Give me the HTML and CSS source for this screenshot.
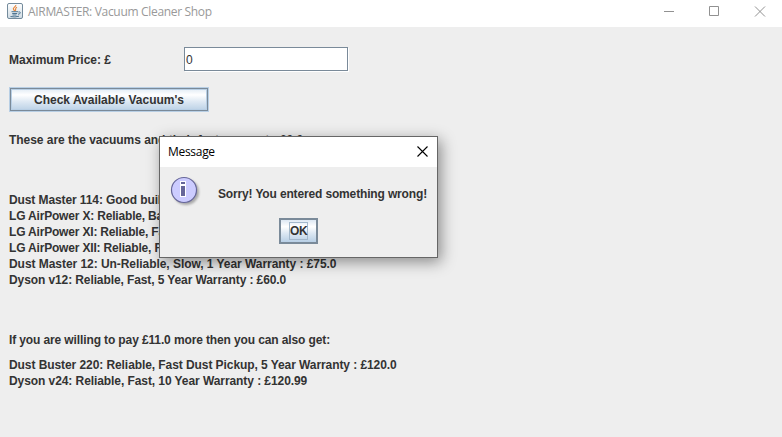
FILE: index.html
```html
<!DOCTYPE html>
<html lang="en">
<head>
<meta charset="utf-8">
<title>AIRMASTER: Vacuum Cleaner Shop</title>
<link rel="stylesheet" href="styles.css">
</head>
<body>
<header class="titlebar">
  <svg class="java" width="16" height="16" viewBox="0 0 16 16">
    <defs><linearGradient id="jg" x1="0" y1="0" x2="0" y2="1"><stop offset="0" stop-color="#fff"/><stop offset="1" stop-color="#cfdbe3"/></linearGradient></defs>
    <rect x=".5" y=".5" width="15" height="15" rx="1.5" fill="url(#jg)" stroke="#748b9c"/>
    <path d="M8.8 2C9.4 3.8 5.3 4.7 6.5 6.4L7.6 8M10 4.2C7.4 5.2 9.4 6.3 8.2 7.8" fill="none" stroke="#e8863a" stroke-width="1.2"/>
    <path d="M4.5 8.7H11M5.2 10.5h5M5.5 12h4M3.5 13.5Q8 14.5 12 13.2M11.3 9q2-.6 2 .7T11 11.3" fill="none" stroke="#4f7591"/>
  </svg>
  <span class="app-title">AIRMASTER: Vacuum Cleaner Shop</span>
  <svg class="controls" width="102" height="12" viewBox="0 0 102 12" fill="none" stroke="#919191">
    <path d="M0 5.5H10M45.5 .5H54.5V9.5H45.5ZM91 .5L101 10.5M101 .5L91 10.5"/>
  </svg>
</header>
<main class="content">
  <div class="price-row"><label class="w-price" for="price">Maximum Price: £</label><input id="price" class="field" value="0"></div>
  <button class="check"><span>Check Available Vacuum's</span></button>
  <p class="intro">These are the vacuums and their features up to £0.0</p>
  <div class="list">
    <p class="tight">Dust Master 114: Good build</p>
    <p class="tighter">LG AirPower X: Reliable, Bag</p>
    <p class="tighter">LG AirPower XI: Reliable, Fast</p>
    <p class="tighter">LG AirPower XII: Reliable, Fast</p>
    <p class="snug">Dust Master 12: Un-Reliable, Slow, 1 Year Warranty : £75.0</p>
    <p class="tight">Dyson v12: Reliable, Fast, 5 Year Warranty : £60.0</p>
  </div>
  <p class="more">If you are willing to pay £11.0 more then you can also get:</p>
  <div class="extra">
    <p>Dust Buster 220: Reliable, Fast Dust Pickup, 5 Year Warranty : £120.0</p>
    <p>Dyson v24: Reliable, Fast, 10 Year Warranty : £120.99</p>
  </div>
</main>
<section class="dialog" role="dialog">
  <div class="dialog-title"><span>Message</span>
    <svg width="11" height="11" viewBox="0 0 11 11"><path d="M.5 .5L10.5 10.5M10.5 .5L.5 10.5" stroke="#000" stroke-width="1.1"/></svg>
  </div>
  <div class="message">
    <svg class="info" width="32" height="32" viewBox="0 0 32 32">
      <defs>
        <filter id="sh" x="-20%" y="-20%" width="150%" height="150%"><feGaussianBlur stdDeviation="1.2"/></filter>
      </defs>
      <circle cx="16" cy="16" r="13" fill="#999" opacity=".8" filter="url(#sh)"/>
      <circle cx="14" cy="14" r="12.5" fill="#ccccff" stroke="#666699" stroke-width="1.2"/>
      <path d="M10 5h6v16h-6z" fill="#fff"/>
      <path d="M11 6h4v2h-4zM11 10h4v10h-4z" fill="#666699"/>
    </svg>
    <span>Sorry! You entered something wrong!</span>
  </div>
  <button class="ok"><span>OK</span></button>
</section>
</body>
</html>
```
FILE: styles.css
```css
* { box-sizing: border-box; }
body {
  margin: 0;
  width: 782px;
  height: 437px;
  overflow: hidden;
  background: #eee;
  color: #333;
  font: bold 12px/16px "Liberation Sans", Arial, sans-serif;
}
p { margin: 0; white-space: pre; }
svg { display: block; flex: none; }
button { font: inherit; color: inherit; padding: 0; }
.titlebar {
  display: flex;
  align-items: flex-start;
  height: 27px;
  background: #fff;
  font: 12px/16px "Open Sans", "Noto Sans", sans-serif;
  color: #999;
}
.java { margin: 3px 5px 0 7px; }
.app-title { margin-top: 4px; white-space: nowrap; letter-spacing: -0.32px; }
.controls { margin: 6px 16px 0 auto; }
.content { padding: 20px 9px 0; }
.price-row { display: flex; align-items: center; height: 25px; }
.w-price { width: 175px; }
.field {
  width: 164px;
  height: 24px;
  margin: 0 0 1px;
  padding: 1px 1px 0;
  border: 1px solid #7a8a99;
  border-radius: 0;
  background: #fff;
  box-shadow: 1px 1px 0 #fff;
  color: #333;
  font: 12px/16px "Liberation Sans", Arial, sans-serif;
  outline: 0;
}
.check {
  display: block;
  width: 200px;
  height: 25px;
  margin-top: 15px;
  border: 1px solid #b8cfe5;
  background: linear-gradient(#dde8f3, #fff 30%, #dde8f3 60%, #b8cfe5);
  box-shadow: inset 0 0 0 1px #7a8a99, inset 0 0 0 2px #b8cfe5;
}
.intro { margin-top: 20px; letter-spacing: -0.04px; }
.snug { letter-spacing: -0.05px; }
.tight { letter-spacing: -0.1px; }
.tighter { letter-spacing: -0.18px; }
.list { margin-top: 44px; }
.more { margin-top: 44px; letter-spacing: -0.12px; }
.extra { margin-top: 9px; letter-spacing: -0.075px; }
.dialog {
  position: absolute;
  left: 159px;
  top: 136px;
  width: 279px;
  height: 122px;
  border: 1px solid #666;
  background: #eee;
  box-shadow: 3px 4px 14px rgba(0, 0, 0, .42);
}
.dialog-title {
  display: flex;
  align-items: center;
  justify-content: space-between;
  height: 30px;
  padding: 0 9px 2px 8px;
  background: #fff;
  color: #000;
  font: 12px/16px "Open Sans", "Noto Sans", sans-serif;
  letter-spacing: -0.3px;
}
.dialog-title span { padding-top: 2px; }
.message { display: flex; height: 42px; padding: 9px 0 0 10px; white-space: nowrap; letter-spacing: -0.15px; }
.message span { margin: 10px 0 0 16px; }
.ok {
  display: grid;
  place-items: center;
  width: 39px;
  height: 26px;
  margin: 9px 0 0 119px;
  border: 2px solid #7a8a99;
  background: linear-gradient(#dde8f3, #fff 30%, #dde8f3 60%, #b8cfe5);
}
.ok span { width: 19px; height: 18px; border: 1px solid #a3b8cc; display: grid; place-items: center; letter-spacing: -0.3px; }
```
